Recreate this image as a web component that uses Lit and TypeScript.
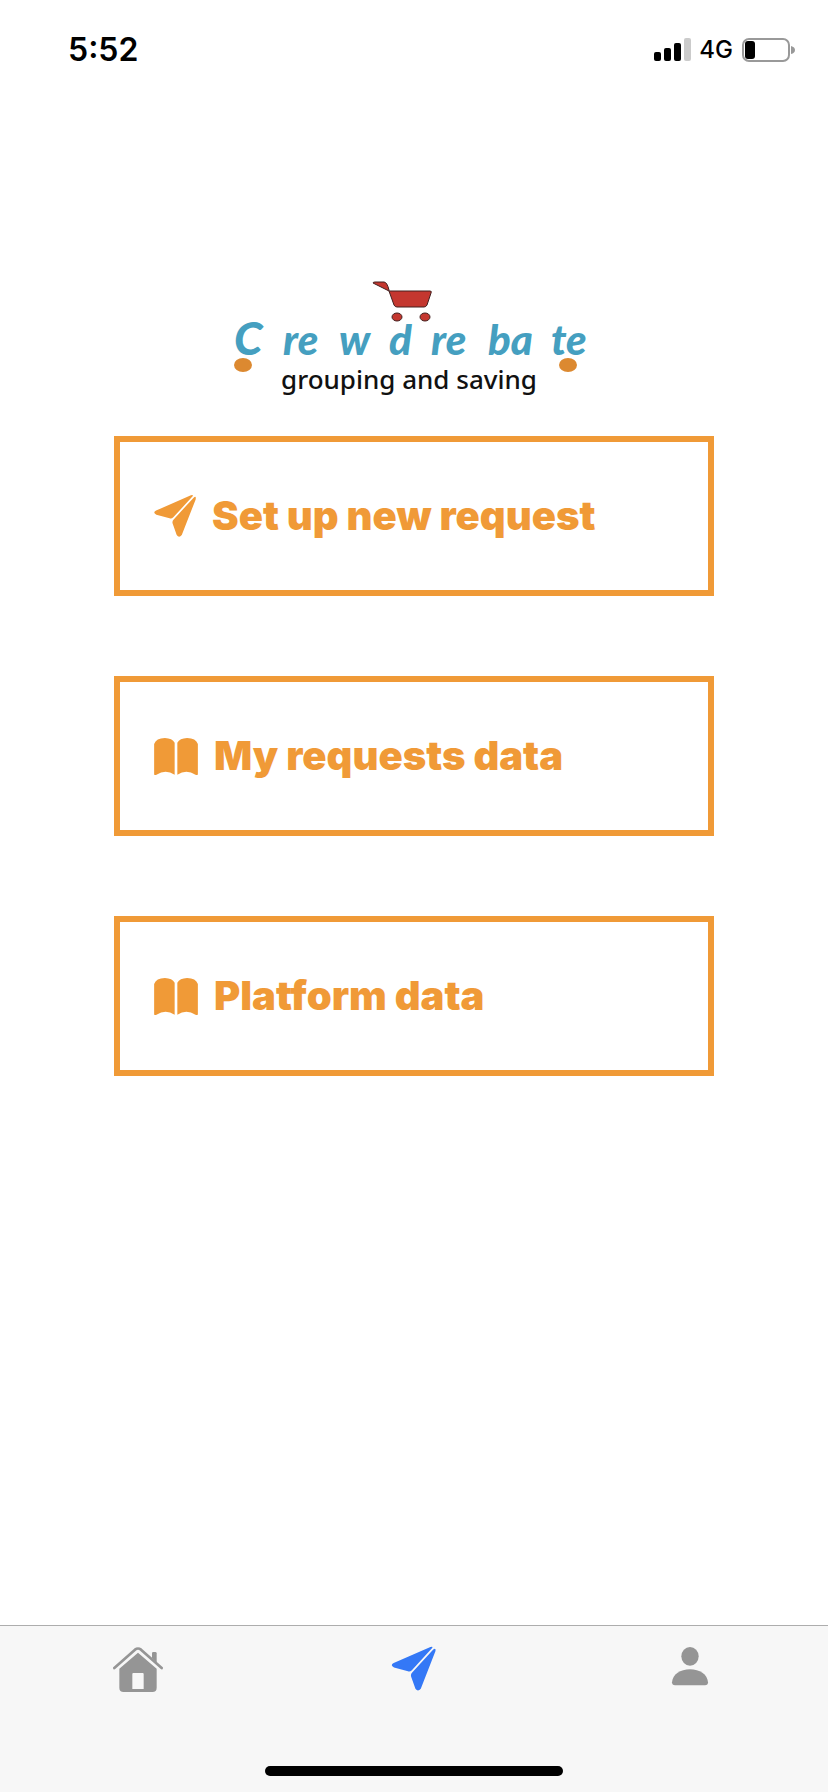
import { LitElement, html, css, svg } from "lit";
import { customElement, state } from "lit/decorators.js";

const plane = svg`
  <path d="M6 46 L109 1 Q119 -2 112 6 L57 66 Q52 71 46 69 L7 58 Q-5 52 6 46Z"/>
  <path d="M117 8 Q125 1 123 13 L82 118 Q74 128 67 118 L55 84 Q53 77 58 72Z"/>`;

const book = svg`
  <path d="M0 18 Q6 0 32 0 Q54 1 61 14 V109 Q34 92 7 109 Q0 112 0 107Z"/>
  <path d="M69 14 Q76 1 98 0 Q124 0 130 18 V107 Q130 112 123 109 Q96 92 69 109Z"/>`;

@customElement("app-logo")
export class AppLogo extends LitElement {
  static styles = css`
    :host { display: block; }
    .logo { display: block; width: 364px; height: 116px; overflow: visible; }
    .word { font: italic 900 42px Lato, "Open Sans", sans-serif; fill: #459fc0; }
    .cap { font-size: 46px; }
    .tagline { font: 500 26px "Noto Sans", "Open Sans", sans-serif; fill: #111; }
  `;

  render() {
    return html`
      <svg class="logo" viewBox="232 280 364 116" role="img" aria-label="Crewdrebate, grouping and saving">
        <g fill="#c4372f" stroke="#43201f" stroke-width="1">
          <path d="M373 283 Q373 282 375 282 H384 Q387 282 389 290 V291Z"/>
          <path d="M389 291 H430 Q432 291 431 293 L427 305 Q426 307 424 307 H397 Q395 307 394 305Z"/>
          <ellipse cx="397" cy="317" rx="5" ry="4"/>
          <ellipse cx="425" cy="317" rx="5" ry="4"/>
        </g>
        <g class="word">
          <text class="cap" x="234" y="355">C</text>
          <text x="283" y="355">re</text>
          <text x="339" y="355">w</text>
          <text x="389" y="355">d</text>
          <text x="431" y="355">re</text>
          <text x="488" y="355">ba</text>
          <text x="551" y="355">te</text>
        </g>
        <ellipse cx="243" cy="365" rx="9" ry="7" fill="#dc8930"/>
        <ellipse cx="568" cy="365" rx="9" ry="7" fill="#dc8930"/>
        <text class="tagline" x="409" y="389" text-anchor="middle">grouping and saving</text>
      </svg>`;
  }
}

@customElement("app-root")
export class AppRoot extends LitElement {
  static styles = css`
    :host {
      display: flex;
      flex-direction: column;
      min-height: 100vh;
      background: #fff;
      color: #000;
      font-family: Inter, "Liberation Sans", sans-serif;
    }
    .status {
      display: flex;
      align-items: center;
      justify-content: space-between;
      height: 100px;
      padding: 0 33px 0 68px;
    }
    .time { font-size: 32px; line-height: 40px; font-weight: 600; }
    .indicators { display: flex; align-items: center; gap: 8px; }
    .network { font-size: 24px; line-height: 32px; font-weight: 500; }
    .signal { width: 38px; height: 24px; }
    .battery { width: 54px; height: 26px; }
    .content {
      flex: 1;
      display: flex;
      flex-direction: column;
      align-items: center;
      gap: 40px;
      padding: 180px 24px 80px;
    }
    .actions {
      display: flex;
      flex-direction: column;
      gap: 80px;
      width: 100%;
      max-width: 600px;
    }
    .action {
      box-sizing: border-box;
      display: flex;
      align-items: center;
      gap: 16px;
      width: 100%;
      min-height: 160px;
      padding: 0 34px;
      border: 6px solid #f09a37;
      border-radius: 0;
      background: #fff;
      color: #f09a37;
      font: 900 40px/48px Inter, "Liberation Sans", sans-serif;
      font-variant-ligatures: none;
      text-align: left;
      cursor: pointer;
    }
    svg { display: block; flex: none; fill: currentColor; }
    .icon-plane { width: 42px; height: 42px; }
    .icon-book { width: 44px; height: 37px; }
    .bottom {
      border-top: 1px solid #adadad;
      background: #f7f7f7;
      padding-bottom: 16px;
    }
    .tabs { display: grid; grid-template-columns: repeat(3, 1fr); }
    .tab {
      display: flex;
      justify-content: center;
      align-items: flex-start;
      height: 140px;
      box-sizing: border-box;
      padding-top: 20px;
      color: #959595;
    }
    .tab.active { color: #3478f6; }
    .icon-tab { width: 50px; height: 46px; }
    .home-bar {
      width: 36%;
      height: 10px;
      margin: 0 auto;
      border-radius: 5px;
      background: #000;
    }
  `;

  static actions = [
    { label: "Set up new request", icon: "plane" },
    { label: "My requests data", icon: "book" },
    { label: "Platform data", icon: "book" },
  ];

  @state() private active = "Requests";

  private tabs = [
    {
      name: "Home",
      box: "0 0 150 138",
      art: svg`
        <path d="M4 66 L66 11 Q75 4 84 11 L146 66" fill="none" stroke="currentColor" stroke-width="8" stroke-linecap="round" stroke-linejoin="round"/>
        <path d="M117 36 V22 Q117 18 121 18 H127 Q131 18 131 22 V50Z"/>
        <path fill-rule="evenodd" d="M19 68 L75 20 L131 68 V125 Q131 138 118 138 H32 Q19 138 19 125Z M58 84 V129 H92 V84 Q92 81 89 81 H61 Q58 81 58 84Z"/>`,
    },
    { name: "Requests", box: "-6 -2 138 129", art: plane },
    {
      name: "Profile",
      box: "0 0 150 138",
      art: svg`
        <ellipse cx="75" cy="31" rx="26" ry="28"/>
        <path d="M21 109 C23 85 46 70 75 70 C104 70 127 85 129 109 Q129 118 120 118 H30 Q21 118 21 109Z"/>`,
    },
  ];

  render() {
    return html`
      <header class="status">
        <span class="time">5:52</span>
        <div class="indicators">
          <svg class="signal" viewBox="0 0 38 24" aria-hidden="true">
            <rect x="1" y="14" width="7" height="9" rx="2"/>
            <rect x="11" y="10" width="7" height="13" rx="2"/>
            <rect x="21" y="5" width="7" height="18" rx="2"/>
            <rect x="31" y="0" width="7" height="23" rx="2" fill="#cbcbcb"/>
          </svg>
          <span class="network">4G</span>
          <svg class="battery" viewBox="0 0 54 26" aria-hidden="true">
            <rect x="2" y="2" width="46" height="22" rx="6" fill="none" stroke="#999" stroke-width="2"/>
            <rect x="4" y="4" width="10" height="18" rx="3"/>
            <path d="M50 9 Q54 10 54 13 Q54 16 50 17Z" fill="#999"/>
          </svg>
        </div>
      </header>
      <main class="content">
        <app-logo></app-logo>
        <div class="actions">
          ${AppRoot.actions.map((a) => html`
            <button class="action" type="button">
              ${a.icon === "plane"
                ? html`<svg class="icon-plane" viewBox="0 0 124 124" aria-hidden="true">${plane}</svg>`
                : html`<svg class="icon-book" viewBox="0 0 130 110" aria-hidden="true">${book}</svg>`}
              <span>${a.label}</span>
            </button>`)}
        </div>
      </main>
      <footer class="bottom">
        <nav class="tabs">
          ${this.tabs.map((t) => html`
            <a class="tab ${t.name === this.active ? "active" : ""}" href="#${t.name.toLowerCase()}"
               aria-label=${t.name} @click=${() => (this.active = t.name)}>
              <svg class="icon-tab" viewBox=${t.box} aria-hidden="true">${t.art}</svg>
            </a>`)}
        </nav>
        <div class="home-bar"></div>
      </footer>`;
  }
}
